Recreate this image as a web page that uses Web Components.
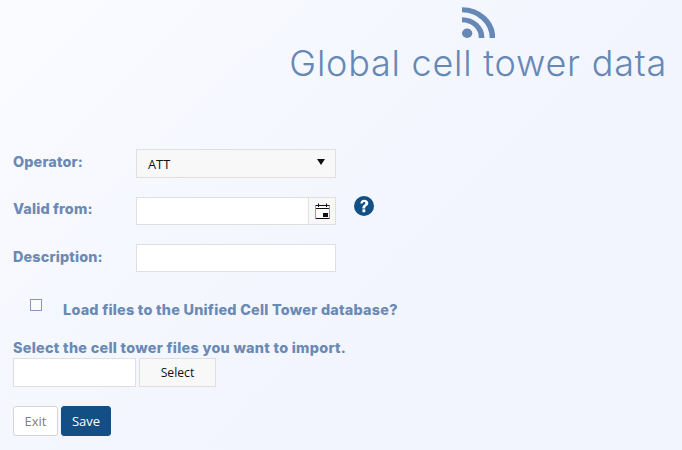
<!DOCTYPE html>
<html>
<head>
<meta charset="utf-8">
<title>Global cell tower data</title>
<style>
  html, body { margin: 0; height: 100%; }
  body {
    width: 682px;
    height: 450px;
    overflow: hidden;
    background: linear-gradient(135deg, #fafbff 0%, #f3f6fe 50%, #f2f4fe 100%);
    font-family: Inter, "Noto Sans", sans-serif;
  }
</style>
</head>
<body>
<tower-page></tower-page>

<script>
const LABEL_COLOR = "#6a8ab5";

class PageHeader extends HTMLElement {
  constructor() {
    super();
    this.attachShadow({ mode: "open" }).innerHTML = `
      <style>
        :host { display: flex; justify-content: flex-end; padding: 7px 15px 0 0; height: 124px; box-sizing: border-box; }
        .wrap { display: flex; flex-direction: column; align-items: center; }
        svg { display: block; width: 33px; height: 31px; }
        h1 {
          margin: 0; font: 300 36px/50px Inter, sans-serif; letter-spacing: .77px;
          color: #6688b6; white-space: nowrap;
        }
      </style>
      <div class="wrap">
        <svg viewBox="0 0 32 33" preserveAspectRatio="none">
          <circle cx="5" cy="28" r="5" fill="#6688b6"/>
          <path d="M0 13.5A19 19 0 0 1 19 33" fill="none" stroke="#6688b6" stroke-width="5.4"/>
          <path d="M0 3A29.5 29.5 0 0 1 29.5 33" fill="none" stroke="#6688b6" stroke-width="5.4"/>
        </svg>
        <h1><slot></slot></h1>
      </div>`;
  }
}

class FormField extends HTMLElement {
  constructor() {
    super();
    this.attachShadow({ mode: "open" }).innerHTML = `
      <style>
        :host { display: flex; align-items: flex-start; }
        label {
          width: 123px; flex: none; color: ${LABEL_COLOR};
          font: 800 14.4px/26px Inter, sans-serif; letter-spacing: .15px;
        }
        :host([tight]) label { line-height: 24px; }
      </style>
      <label><slot name="label"></slot></label>
      <slot></slot>`;
  }
}

class SelectBox extends HTMLElement {
  constructor() {
    super();
    this.attachShadow({ mode: "open" }).innerHTML = `
      <style>
        :host {
          display: flex; align-items: center; justify-content: space-between;
          box-sizing: border-box; width: 200px; height: 29px; padding: 0 11px;
          background: #f8f8f8; border: 1px solid #dfdfdf;
          font: 12.8px "Open Sans", sans-serif; color: #111;
        }
        i { width: 0; height: 0; border: 4.5px solid transparent; border-top: 6px solid #111; border-bottom: 0; margin: -4px -1px 0 0; }
      </style>
      <slot></slot><i></i>`;
  }
}

class TextBox extends HTMLElement {
  constructor() {
    super();
    this.attachShadow({ mode: "open" }).innerHTML = `
      <style>
        :host {
          display: block; box-sizing: border-box; width: 200px; height: 28px;
          background: #fff; border: 1px solid #dfdfdf;
        }
      </style>`;
  }
}

class DateBox extends HTMLElement {
  constructor() {
    super();
    this.attachShadow({ mode: "open" }).innerHTML = `
      <style>
        :host {
          display: flex; justify-content: flex-end; box-sizing: border-box; width: 200px; height: 28px;
          background: #fff; border: 1px solid #dfdfdf;
        }
        .btn { width: 26px; display: flex; align-items: center; justify-content: center; background: #f8f8f8; border-left: 1px solid #dfdfdf; }
        svg { display: block; width: 15px; height: 16px; }
      </style>
      <div class="btn">
        <svg viewBox="0 0 15 16">
          <rect x="0.5" y="2.5" width="14" height="13" fill="#fff"/>
          <path d="M0.5 3V15M14.5 3V15" stroke="#d8981e"/>
          <path d="M1 5.5H14M0.5 2.5H14.5M0.5 15.5H14.5" stroke="#111"/>
          <path d="M3.5 0.5V4M11.5 0.5V4" stroke="#111"/>
          <rect x="8" y="10" width="5" height="4" fill="#111"/>
        </svg>
      </div>`;
  }
}

class PlainButton extends HTMLElement {
  constructor() {
    super();
    this.attachShadow({ mode: "open" }).innerHTML = `
      <style>
        :host {
          display: inline-flex; align-items: center; justify-content: center; box-sizing: border-box;
          font: 13px "Open Sans", sans-serif; border: 1px solid #dfdfdf;
        }
        :host([kind="select"]) { width: 77px; height: 29px; background: #f8f8f8; color: #111; font-size: 12.2px; }
        :host([kind="exit"]) { width: 45px; height: 30px; background: #fff; color: #808080; border-color: #d6d6d6; border-radius: 3px; }
        :host([kind="save"]) { width: 50px; height: 30px; background: #134f84; color: #fff; border-color: #134f84; border-radius: 3px; }
      </style>
      <slot></slot>`;
  }
}

class HelpIcon extends HTMLElement {
  constructor() {
    super();
    this.attachShadow({ mode: "open" }).innerHTML = `
      <style>
        :host { display: block; margin: -1px 0 0 18px; width: 20px; height: 20px; }
        svg { display: block; }
      </style>
      <svg viewBox="0 0 20 20" width="20" height="20">
        <circle cx="10" cy="10" r="10" fill="#134f84"/>
        <path d="M6.3 7.6C6.5 5.3 8 3.7 10.3 3.7c2.3 0 4 1.4 4 3.4 0 1.6-1 2.4-2 3.1-.8.5-1.1.9-1.1 1.7v.5H8.4v-.7c0-1.4.6-2.1 1.5-2.8.9-.6 1.4-1 1.4-1.7 0-.7-.5-1.2-1.2-1.2-.8 0-1.4.6-1.5 1.6z" fill="#fff"/>
        <rect x="8.4" y="13.3" width="2.9" height="2.9" rx=".4" fill="#fff"/>
      </svg>`;
  }
}

class TowerPage extends HTMLElement {
  constructor() {
    super();
    this.attachShadow({ mode: "open" }).innerHTML = `
      <style>
        :host { display: block; }
        form-field { margin-left: 13px; }
        .f1 { margin-top: 25px; }
        .f2 { margin-top: 19px; }
        .check {
          display: flex; align-items: center; margin: 28px 0 0 30px;
          color: ${LABEL_COLOR}; font: 800 14.4px/20px Inter, sans-serif; letter-spacing: .24px;
        }
        .check i {
          width: 12px; height: 12px; box-sizing: border-box; border: 1px solid #7f99bd; background: #fbfcff;
          margin: -10px 21px 0 0;
        }
        .files { margin: 19px 0 0 13px; }
        .files p { margin: 0; color: ${LABEL_COLOR}; font: 800 14.4px/18px Inter, sans-serif; letter-spacing: .285px; }
        .picker { display: flex; gap: 3px; margin-top: 1px; }
        .picker text-box { width: 123px; height: 29px; }
        .actions { display: flex; gap: 3px; margin: 19px 0 0 13px; }
      </style>
      <page-header>Global cell tower data</page-header>
      <form-field class="f1"><span slot="label">Operator:</span><select-box>ATT</select-box></form-field>
      <form-field class="f2" tight><span slot="label">Valid from:</span><date-box></date-box><help-icon></help-icon></form-field>
      <form-field class="f2"><span slot="label">Description:</span><text-box></text-box></form-field>
      <div class="check"><i></i><span>Load files to the Unified Cell Tower database?</span></div>
      <div class="files">
        <p>Select the cell tower files you want to import.</p>
        <div class="picker"><text-box></text-box><plain-button kind="select">Select</plain-button></div>
      </div>
      <div class="actions"><plain-button kind="exit">Exit</plain-button><plain-button kind="save">Save</plain-button></div>`;
  }
}

customElements.define("page-header", PageHeader);
customElements.define("form-field", FormField);
customElements.define("select-box", SelectBox);
customElements.define("text-box", TextBox);
customElements.define("date-box", DateBox);
customElements.define("plain-button", PlainButton);
customElements.define("help-icon", HelpIcon);
customElements.define("tower-page", TowerPage);
</script>
</body>
</html>
